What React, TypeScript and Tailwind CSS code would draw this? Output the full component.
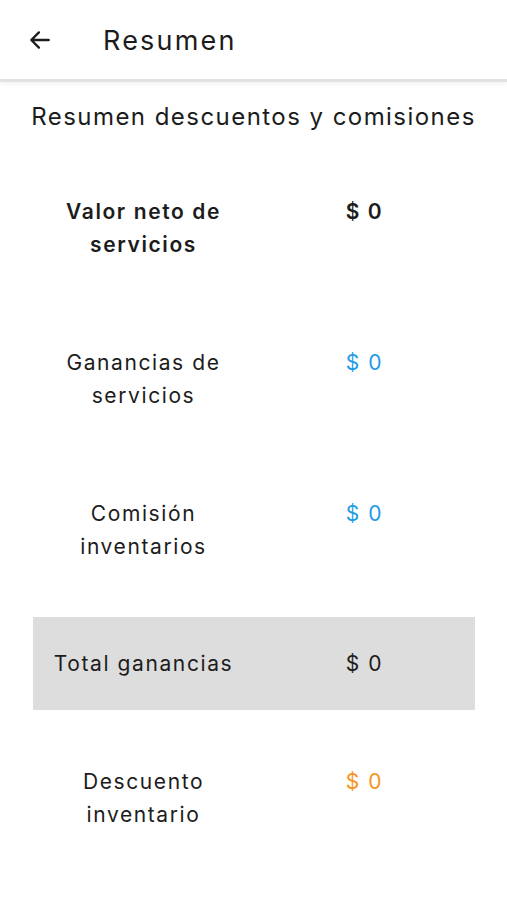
import React from "react";

type Row = {
  label: React.ReactNode;
  value: string;
  tone: "bold" | "blue" | "orange" | "plain";
  highlight?: boolean;
};

const ROWS: Row[] = [
  { label: <>Valor neto de<br />servicios</>, value: "$ 0", tone: "bold" },
  { label: <>Ganancias de<br />servicios</>, value: "$ 0", tone: "blue" },
  { label: <>Comisión<br />inventarios</>, value: "$ 0", tone: "blue" },
  { label: "Total ganancias", value: "$ 0", tone: "plain", highlight: true },
  { label: <>Descuento<br />inventario</>, value: "$ 0", tone: "orange" },
];

function valueColor(tone: Row["tone"]) {
  if (tone === "blue") return "text-[#1e9be6]";
  if (tone === "orange") return "text-[#f7941d]";
  return "text-[#1c1c1c]";
}

export default function App() {
  return (
    <div className="min-h-[900px] bg-white font-['Inter',sans-serif] text-[#1c1c1c]">
      {/* App bar */}
      <header className="flex h-[82px] items-center border-b-[3px] border-[#e2e2e2] shadow-[0_2px_4px_rgba(0,0,0,0.06)]">
        <svg className="ml-[27px] h-[26px] w-[26px]" viewBox="0 0 24 24" fill="none" stroke="#1c1c1c" strokeWidth={2.2} strokeLinecap="round" strokeLinejoin="round">
          <path d="M20 12H4.5M11 5l-7 7 7 7" />
        </svg>
        <h1 className="ml-[50px] mt-[4px] text-[27px] tracking-[2.2px]">Resumen</h1>
      </header>

      <h2 className="mt-[17px] text-center text-[24px] leading-[36px] tracking-[1.45px]">
        Resumen descuentos y comisiones
      </h2>

      {/* Summary table */}
      <div className="mx-[33px] mt-[17px] w-[442px]">
        {ROWS.map((r, i) =>
          r.highlight ? (
            <div key={i} className="my-[12px] grid grid-cols-2 bg-[#dddddd] py-[30px] text-[21px] leading-[33px] tracking-[1.6px]">
              <div className="text-center">{r.label}</div>
              <div className="text-center">{r.value}</div>
            </div>
          ) : (
            <div
              key={i}
              className={`grid grid-cols-2 py-[42.5px] text-[21px] leading-[33px] tracking-[1.6px] ${r.tone === "bold" ? "font-semibold tracking-[1.2px]" : ""}`}
            >
              <div className="text-center">{r.label}</div>
              <div className={`text-center ${valueColor(r.tone)}`}>{r.value}</div>
            </div>
          )
        )}
      </div>
    </div>
  );
}
